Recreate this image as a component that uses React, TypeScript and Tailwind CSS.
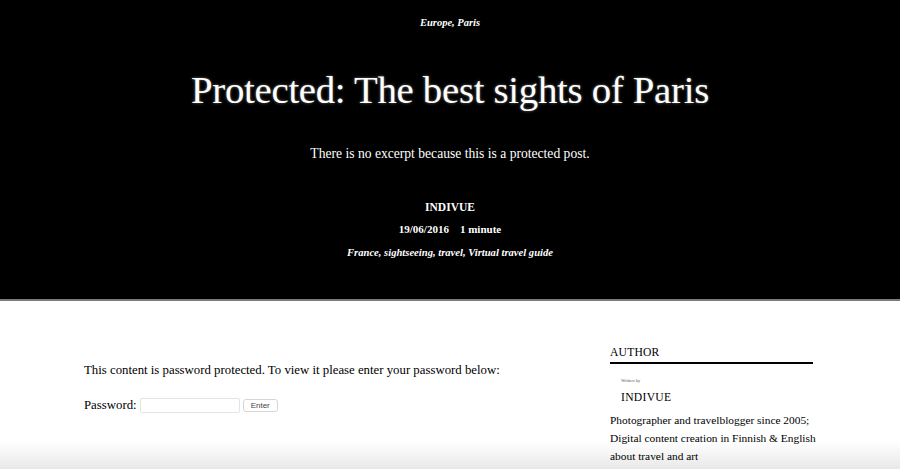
import React from 'react';

const serif = { fontFamily: '"Liberation Serif", "DejaVu Serif", serif' };

export default function App() {
  const tags = ['France', 'sightseeing', 'travel', 'Virtual travel guide'];

  return (
    <div className="relative w-[900px] h-[469px] overflow-hidden bg-white text-black" style={serif}>
      {/* bottom fade, sits behind the text */}
      <div className="absolute left-0 right-0 bottom-0 h-[28px] bg-gradient-to-b from-white/0 to-[#e8e8e8] pointer-events-none" />

      {/* Hero */}
      <header className="relative h-[301px] bg-black text-white flex flex-col items-center border-b-2 border-[#7a7a7a]">
        <div className="mt-[15px] text-[10.5px] italic font-bold leading-4">Europe, Paris</div>
        <h1 className="mt-[34px] text-[38.8px] leading-[50px] tracking-[-0.3px] [text-shadow:0_0_3px_rgba(255,255,255,0.45)]">
          Protected: The best sights of Paris
        </h1>
        <p className="mt-[29px] text-[13.6px] leading-5">There is no excerpt because this is a protected post.</p>
        <div className="mt-[35px] text-[11.5px] font-bold leading-4">INDIVUE</div>
        <div className="mt-[6px] text-[11px] font-bold leading-4 flex gap-[11px]">
          <span>19/06/2016</span>
          <span>1 minute</span>
        </div>
        <div className="mt-[8px] text-[10.6px] font-bold italic leading-4">{tags.join(', ')}</div>
      </header>

      {/* Body */}
      <main className="relative flex pl-[84px] pt-[44px]">
        <div className="w-[526px] pt-[15px]">
          <p className="text-[12.8px] leading-5">
            This content is password protected. To view it please enter your password below:
          </p>
          <form className="mt-[16px] flex items-center text-[12.8px]">
            <label className="mr-[3px]">Password:</label>
            <input
              type="password"
              className="w-[100px] h-[15px] border border-[#e4e4e4] rounded-[2px] bg-white"
            />
            <button
              type="button"
              className="ml-[3px] h-[13px] px-[7px] border border-[#d6d6d6] rounded-[3px] bg-white text-[8px] leading-3 text-[#444]"
              style={{ fontFamily: '"Liberation Sans", Arial, sans-serif' }}
            >
              Enter
            </button>
          </form>
        </div>

        <aside className="w-[203px]">
          <h2 className="text-[11.6px] leading-4 pb-[1px] border-b-2 border-black tracking-[0.2px]">AUTHOR</h2>
          <div className="pl-[11px] mt-[14px]">
            <div className="text-[4.5px] leading-[6px] text-[#555]">Written by</div>
            <div className="mt-[6px] text-[11.6px] leading-4 tracking-[0.3px]">INDIVUE</div>
          </div>
          <p className="mt-[5px] text-[11.4px] leading-[18px] whitespace-nowrap">
            Photographer and travelblogger since 2005;
            <br />
            Digital content creation in Finnish &amp; English
            <br />
            about travel and art
          </p>
        </aside>
      </main>
    </div>
  );
}
